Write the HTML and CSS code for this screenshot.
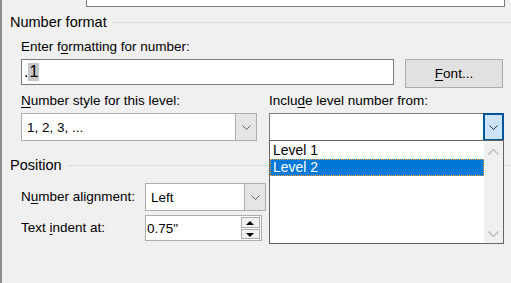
FILE: index.html
```html
<!DOCTYPE html>
<html lang="en">

<head>
    <meta charset="UTF-8">
    <title>Define new multilevel list</title>
    <link rel="stylesheet" href="styles.css">
</head>

<body>
    <div class="dialog">
        <div class="top-field"></div>

        <div class="group-title"><span>Number format</span><i></i></div>
        <div class="grid">
            <div class="label wide">Enter f<u>o</u>rmatting for number:</div>
            <div class="textbox wide"><span class="dot">.</span><span class="sel">1</span></div>
            <button class="btn"><u>F</u>ont...</button>
        </div>

        <div class="pair">
            <div class="col">
                <div class="label"><u>N</u>umber style for this level:</div>
                <div class="combo">
                    <span class="val">1, 2, 3, ...</span>
                    <span class="arrow">
                        <svg width="9" height="5" viewBox="0 0 9 5"><path d="M0.5 0.5 L4.5 4.5 L8.5 0.5" fill="none" stroke="#606060"/></svg>
                    </span>
                </div>
            </div>
            <div class="col">
                <div class="label">Inclu<u>d</u>e level number from:</div>
                <div class="combo open">
                    <span class="val"></span>
                    <span class="arrow">
                        <svg width="9" height="5" viewBox="0 0 9 5"><path d="M0.5 0.5 L4.5 4.5 L8.5 0.5" fill="none" stroke="#333"/></svg>
                    </span>
                    <div class="list">
                        <div class="items">
                            <div class="item">Level 1</div>
                            <div class="item active">Level 2</div>
                        </div>
                        <div class="scroll">
                            <svg width="11" height="6" viewBox="0 0 11 6"><path d="M0.5 5.5 L5.5 0.5 L10.5 5.5" fill="none" stroke="#c2c2c2" stroke-width="1.6"/></svg>
                            <svg width="11" height="6" viewBox="0 0 11 6"><path d="M0.5 0.5 L5.5 5.5 L10.5 0.5" fill="none" stroke="#c2c2c2" stroke-width="1.6"/></svg>
                        </div>
                    </div>
                </div>
            </div>
        </div>

        <div class="group-title pos"><span>Position</span><i></i></div>
        <div class="field-row">
            <div class="label side">N<u>u</u>mber alignment:</div>
            <div class="combo small">
                <span class="val">Left</span>
                <span class="arrow">
                    <svg width="9" height="5" viewBox="0 0 9 5"><path d="M0.5 0.5 L4.5 4.5 L8.5 0.5" fill="none" stroke="#606060"/></svg>
                </span>
            </div>
        </div>
        <div class="field-row indent">
            <div class="label side">Text <u>i</u>ndent at:</div>
            <div class="spin">
                <span class="val">0.75"</span>
                <span class="spin-btns">
                    <span class="up"></span>
                    <span class="down"></span>
                </span>
            </div>
        </div>
    </div>
</body>

</html>
```

FILE: styles.css
```css
body {
    margin: 0;
    padding: 0;
    background: #f0f0f0;
    font-family: "Liberation Sans", Arial, sans-serif;
    font-size: 13.5px;
    color: #000;
}

.dialog {
    height: 283px;
    border-left: 2px solid #8c8c8c;
    box-sizing: border-box;
    overflow: hidden;
}

u {
    text-decoration-thickness: 1px;
    text-underline-offset: 2px;
}

.top-field {
    margin-left: 84px;
    width: 419px;
    height: 7px;
    box-sizing: border-box;
    background: #fff;
    border: 1px solid #7a7a7a;
    border-top: 0;
}

.group-title {
    display: flex;
    align-items: center;
    height: 18px;
    margin: 6px 0 0 8px;
}

.group-title span {
    font-size: 14.5px;
    padding-right: 5px;
}

.group-title i {
    flex: 1;
    height: 1px;
    background: #dcdcdc;
}

.label {
    line-height: 18px;
}

.grid {
    display: grid;
    grid-template-columns: 373px 98px;
    column-gap: 11px;
    margin: 7px 0 0 19px;
}

.grid .wide {
    grid-column: 1;
}

.grid .label {
    margin-bottom: 3px;
    grid-column: 1 / 3;
}

.textbox {
    height: 26px;
    box-sizing: border-box;
    background: #fff;
    border: 1px solid #7a7a7a;
    display: flex;
    align-items: center;
    padding-left: 2px;
    font-size: 16px;
}

.textbox .sel {
    background: #c8c8c8;
    padding: 0 1px;
}

.btn {
    height: 29px;
    margin: 0;
    background: #e1e1e1;
    border: 1px solid #adadad;
    font-family: inherit;
    font-size: 13.5px;
    color: #000;
    padding: 0;
}

.pair {
    display: flex;
    margin: 4px 0 0 19px;
    gap: 12px;
}

.col {
    width: 236px;
}

.col+.col {
    width: 235px;
}

.col .label {
    margin-bottom: 3px;
}

.combo {
    position: relative;
    height: 28px;
    box-sizing: border-box;
    background: #fff;
    border: 1px solid #adadad;
    display: flex;
}

.combo .val {
    flex: 1;
    display: flex;
    align-items: center;
    padding-left: 5px;
}

.combo .arrow {
    width: 20px;
    display: flex;
    align-items: center;
    justify-content: center;
    background: #e5e5e5;
    border-left: 1px solid #adadad;
}

.combo.open {
    border-color: #7a7a7a;
}

.combo.open .arrow {
    background: #cce4f7;
    border: 2px solid #005499;
    margin: -1px -1px -1px 0;
    width: 17px;
}

.list {
    position: absolute;
    left: -1px;
    top: 26px;
    width: 235px;
    height: 104px;
    box-sizing: border-box;
    background: #fff;
    border: 1px solid #646464;
    display: flex;
}

.items {
    flex: 1;
    padding-top: 1px;
}

.item {
    height: 17px;
    line-height: 17px;
    padding-left: 3px;
    font-size: 14px;
}

.item.active {
    background: #0078d7;
    color: #fff;
    outline: 1px dotted #f2a33a;
    outline-offset: -1px;
}

.scroll {
    width: 19px;
    background: #f0f0f0;
    display: flex;
    flex-direction: column;
    justify-content: space-between;
    align-items: center;
    padding: 8px 0 6px;
}

.pos {
    margin-top: 15px;
}

.field-row {
    display: flex;
    align-items: center;
    margin: 9px 0 0 19px;
}

.field-row.indent {
    margin-top: 4px;
}

.side {
    width: 124px;
}

.combo.small {
    width: 121px;
}

.spin {
    width: 117px;
    height: 26px;
    box-sizing: border-box;
    background: #fff;
    border: 1px solid #adadad;
    display: flex;
}

.spin .val {
    flex: 1;
    display: flex;
    align-items: center;
    padding-left: 1px;
}

.spin-btns {
    width: 19px;
    display: flex;
    flex-direction: column;
    padding: 1px;
    gap: 1px;
}

.spin-btns span {
    flex: 1;
    background: #f0f0f0;
    border: 1px solid #adadad;
    position: relative;
}

.spin-btns span::after {
    content: "";
    position: absolute;
    left: 4px;
    top: 3px;
    border-left: 4px solid transparent;
    border-right: 4px solid transparent;
}

.spin-btns .up::after {
    border-bottom: 4px solid #000;
}

.spin-btns .down::after {
    border-top: 4px solid #000;
}
```
